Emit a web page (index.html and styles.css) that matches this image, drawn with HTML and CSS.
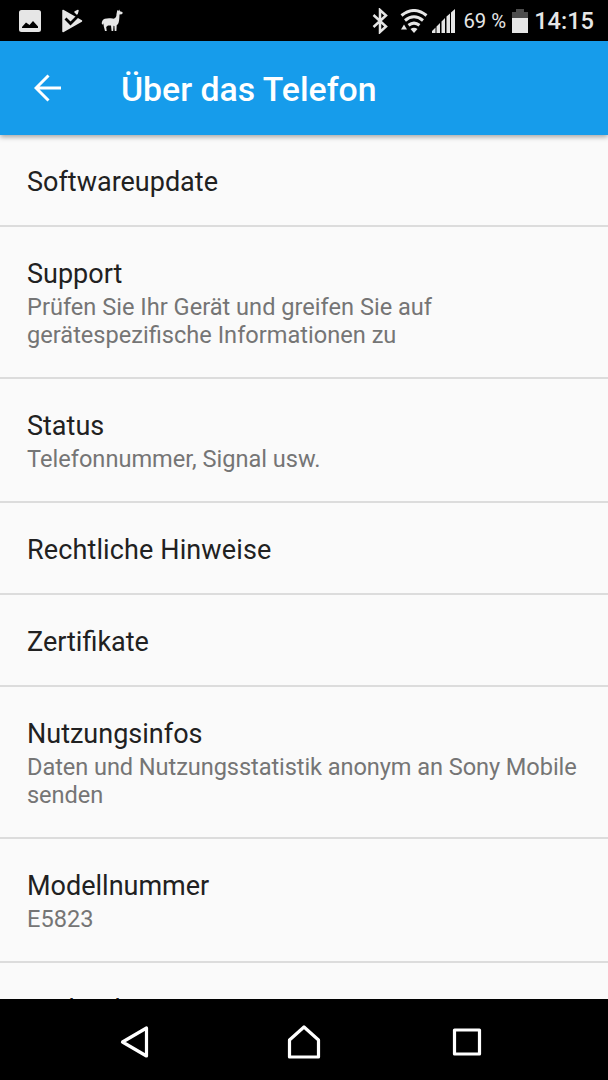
FILE: index.html
```html
<!DOCTYPE html>
<html lang="de">
<head>
    <meta charset="UTF-8">
    <title>Über das Telefon</title>
    <link rel="stylesheet" href="styles.css">
</head>
<body>
    <div class="phone">
        <div class="status-bar">
            <svg class="icon-picture" width="22" height="22" viewBox="0 0 22 22">
                <path fill-rule="evenodd" d="M2.500 0h17A2.500 2.500 0 0 1 22 2.500v17a2.500 2.500 0 0 1-2.500 2.500h-17A2.500 2.500 0 0 1 0 19.500v-17A2.500 2.500 0 0 1 2.500 0zM3 18h16v-1.500L14 11l-3.500 4L7 12.500 3 17z"/>
            </svg>
            <svg class="icon-play" width="22" height="24" viewBox="0 0 22 24">
                <path d="M2 1.500l18.500 10.500L2 22.500zM14 3l3-1.500L16 5z" class="play"/>
                <path class="check" d="M4.500 9.500l5 5L19 5"/>
            </svg>
            <svg class="icon-alpaca" width="23" height="23" viewBox="0 0 23 23">
                <path d="M15.500 5l.8-4 1 .9L18.200.5l.8 1.700 2.300.9c.7.800.3 1.900-.6 2.100l-2.200.3c-.1 3-.2 6-1 8.500-.3 1-1 1.800-1.800 2.300l-.3 5.700h-1.700l-.3-5-.9-.3-.3 5.300h-1.600l-.6-5.600c-1 .2-2 .2-3 0L5.200 18l.5 4H4L2.700 17c-.2-1 0-2 .2-3l-.8 1.800L.8 15c-.2-2.200.8-4.500 3-5.200C6.500 9 9 9 11.500 9.600 14.500 10 15.500 8 15.500 5z"/>
            </svg>
            <div class="status-right">
                <svg class="icon-bluetooth" width="16" height="26" viewBox="0 0 16 26">
                    <path d="M1.500 7l12.500 11.500-6 5.500V2l6 5.500L1.500 19"/>
                </svg>
                <svg class="icon-wifi" width="30" height="24" viewBox="0 0 30 24">
                    <path class="arc" d="M2.500 6.500Q15-3.500 27.500 6.500M6 11.500Q15 4 24 11.500M9.500 16.300Q15 12 20.500 16.300"/>
                    <path d="M11.500 20q3.500-2.500 7 0L15 24zM5 15.500l3 5H2z"/>
                </svg>
                <svg class="icon-signal" width="24" height="24" viewBox="0 0 24 24">
                    <path d="M0 24v-2l3.500-3.500V24zM4.500 24v-6.500L8 14v10zM9.500 24V12.500L13 9v15zM14.500 24V7.500L18 4.500V24zM19 24V3.500L23 0v24z"/>
                </svg>
                <span class="percent">69 %</span>
                <svg class="icon-battery" width="16" height="24" viewBox="0 0 16 24">
                    <path class="empty" d="M0 9V3h4V0h8v3h4v6z"/>
                    <path d="M0 9h16v15H0z"/>
                </svg>
                <span class="clock">14:15</span>
            </div>
        </div>

        <div class="app-bar">
            <svg class="icon-back" width="28" height="28" viewBox="0 0 28 28">
                <path d="M27 14H3M14.500 1.500L2 14l12.500 12.500"/>
            </svg>
            <h1>Über das Telefon</h1>
        </div>

        <div class="list">
            <div class="item">
                <div class="title">Softwareupdate</div>
            </div>
            <div class="item">
                <div class="title">Support</div>
                <div class="summary">Prüfen Sie Ihr Gerät und greifen Sie auf<br>gerätespezifische Informationen zu</div>
            </div>
            <div class="item">
                <div class="title">Status</div>
                <div class="summary">Telefonnummer, Signal usw.</div>
            </div>
            <div class="item">
                <div class="title wide">Rechtliche Hinweise</div>
            </div>
            <div class="item">
                <div class="title">Zertifikate</div>
            </div>
            <div class="item">
                <div class="title">Nutzungsinfos</div>
                <div class="summary tight">Daten und Nutzungsstatistik anonym an Sony Mobile<br>senden</div>
            </div>
            <div class="item">
                <div class="title">Modellnummer</div>
                <div class="summary">E5823</div>
            </div>
            <div class="item">
                <div class="title">Android-Version</div>
            </div>
        </div>

        <div class="nav-bar">
            <svg class="nav-back" width="30" height="34" viewBox="0 0 30 34">
                <path d="M26.500 3v28L2.500 17z"/>
            </svg>
            <svg class="nav-home" width="36" height="36" viewBox="0 0 36 36">
                <path d="M3.500 33v-17L18 3l14.500 13v17z"/>
            </svg>
            <svg class="nav-recent" width="30" height="30" viewBox="0 0 30 30">
                <path d="M2.500 3h25v24h-25z"/>
            </svg>
        </div>
    </div>
</body>
</html>
```
FILE: styles.css
```css
:root {
    --blue: #169ceb;
    --icon: #e6e6e6;
}

* {
    box-sizing: border-box;
}

body {
    margin: 0;
    font-family: Roboto, sans-serif;
    background-color: #fafafa;
}

.phone {
    width: 608px;
    height: 1080px;
    display: flex;
    flex-direction: column;
    overflow: hidden;
}

.status-bar {
    flex: none;
    height: 41px;
    padding: 0 14px 0 19px;
    display: flex;
    align-items: center;
    background-color: #000;
    color: var(--icon);
}

.status-bar svg {
    flex: none;
    fill: var(--icon);
}

.icon-play {
    margin-left: 20px;
}

.icon-play .play {
    stroke: var(--icon);
    stroke-width: 1.5;
    stroke-linejoin: round;
}

.icon-play .check {
    fill: none;
    stroke: #000;
    stroke-width: 2.8;
}

.icon-alpaca {
    margin-left: 18px;
}

.status-right {
    margin-left: auto;
    display: flex;
    align-items: center;
}

.status-right .icon-bluetooth {
    fill: none;
    stroke: var(--icon);
    stroke-width: 2.5;
}

.icon-wifi {
    margin-left: 11px;
}

.icon-wifi .arc {
    fill: none;
    stroke: var(--icon);
    stroke-width: 3;
}

.icon-signal {
    margin-left: 3px;
}

.percent {
    margin-left: 7px;
    font-size: 20.3px;
}

.icon-battery {
    margin-left: 6px;
}

.icon-battery .empty {
    fill: #4c4c4c;
}

.clock {
    margin-left: 6px;
    font-size: 23.6px;
    font-weight: 500;
}

.app-bar {
    flex: none;
    position: relative;
    height: 94px;
    padding-left: 34px;
    display: flex;
    align-items: center;
    background-color: var(--blue);
    box-shadow: 0 2px 5px rgba(0, 0, 0, 0.35);
}

.icon-back {
    fill: none;
    stroke: #fff;
    stroke-width: 3;
}

.app-bar h1 {
    margin: 3px 0 0 59px;
    color: #fff;
    font-size: 33.8px;
    font-weight: 500;
}

.list {
    flex: 1;
    min-height: 0;
    overflow: hidden;
    background-color: #fafafa;
}

.item {
    padding: 31px 27px 27px;
    border-bottom: 2px solid #dcdcdc;
}

.title {
    font-size: 27px;
    line-height: 32px;
    color: #212121;
}

.title.wide {
    letter-spacing: 0.12px;
}

.summary {
    margin-top: 3px;
    margin-bottom: 1px;
    font-size: 23.6px;
    line-height: 28px;
    color: #757575;
    white-space: nowrap;
}

.summary.tight {
    letter-spacing: -0.08px;
}

.nav-bar {
    flex: none;
    height: 81px;
    padding: 5px 0 0 120px;
    display: flex;
    align-items: center;
    background-color: #000;
}

.nav-bar svg {
    fill: none;
    stroke: #fff;
    stroke-width: 3.2;
    stroke-linejoin: round;
}

.nav-home {
    margin-left: 136px;
}

.nav-recent {
    margin-left: 130px;
}
```
